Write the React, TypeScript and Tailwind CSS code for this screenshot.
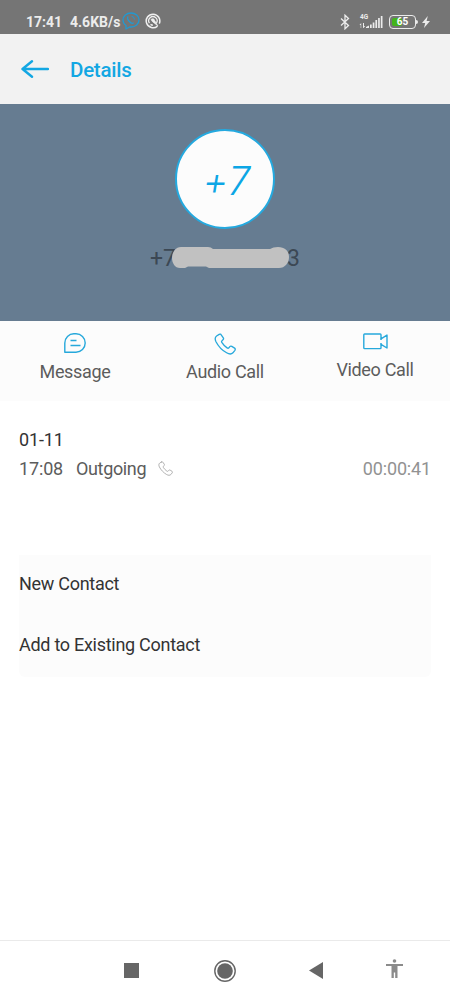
import type { ReactNode } from "react";

const menuItems = ["New Contact", "Add to Existing Contact"];

function PhoneIcon({ className }: { className: string }) {
  return (
    <svg viewBox="0 0 22 22" fill="none" stroke="currentColor" strokeWidth="1.3" strokeLinejoin="round" strokeLinecap="round" className={className}>
      <path d="M5.2 1.4 2.600 3C1 4.100.9 6.400 2 8.700 4.200 13 8.200 17.300 12.600 19.800c2.600 1.500 4.900 1.500 6.300 0l2-2.500c.6-.8.4-1.700-.3-2.200l-2.800-1.700c-.8-.5-1.500-.3-2 .3l-.9 1.100c-.5.5-1.100.6-1.800.1-2.100-1.500-4-3.400-5.300-5.500-.4-.7-.3-1.300.2-1.700l1-.9c.6-.5.7-1.200.3-1.900L7.200 1.900c-.4-.8-1.200-1-2-.5Z" />
    </svg>
  );
}

function StatusBar() {
  return (
    <div className="h-[34px] bg-[#757575] flex items-center pl-[26px] pr-[20px] pt-[9px] text-[#ececec]">
      <span className="w-[44px] text-[14px] leading-none font-bold whitespace-nowrap">17:41</span>
      <span className="w-[52px] text-[14px] leading-none font-bold whitespace-nowrap">4.6KB/s</span>
      <svg viewBox="0 0 18 18" fill="none" stroke="#2299d0" strokeWidth="1.3" strokeLinejoin="round" className="w-[18px] h-[18px] shrink-0 -mt-px">
        <path d="M4 13.500C2 12 1 10 1 8c0-4 3.500-7 8-7s8 3 8 7-3.500 7-8 7H7.500L4 17Z" />
        <path d="M6.300 4.500C5 5.300 5.400 7.200 6.900 9s3.400 2.900 4.800 1.800" />
        <path d="M9.500 4.300q2.800.3 3 3.200" strokeWidth="1" />
      </svg>
      <svg viewBox="0 0 16 16" fill="none" stroke="#f0f0f0" className="ml-[5px] -mt-px w-4 h-4 shrink-0">
        <path d="M12.500 13.100A6.800 6.800 0 1 1 14.300 10.600" strokeWidth="1.500" />
        <path d="M4.400 10.200A4.200 4.200 0 1 1 11.500 10M8 12.200a4.200 4.200 0 0 1-2.500-.8" strokeWidth="1.300" />
        <path d="M6 6.500c1-1.300 3.500-.8 3.600 1L12.800 12.800 7.500 8.700Z" fill="#f0f0f0" strokeWidth="0.700" />
      </svg>

      <div className="ml-auto flex items-center">
        <svg viewBox="0 0 10 16" fill="none" stroke="currentColor" strokeWidth="1.300" className="w-[10px] h-4">
          <path d="m1 4.500 7.500 7L5 14.800V1.200l3.500 3.300-7.500 7" />
        </svg>
        <svg viewBox="0 0 25 16" fill="currentColor" className="ml-[9px] w-[25px] h-4 overflow-visible">
          <text x="1" y="4.800" fontSize="6.500" fontWeight="700">4G</text>
          <path d="M1.700 14V11H.5l1.700-2v5ZM4 9h1v3h1.200L4.500 14H4Z" />
          <path d="M7 14v-1l3-1.500V14ZM11 10.500h1.700V14H11ZM13.700 8.500h1.700V14h-1.700ZM16.400 6h1.700v8h-1.700ZM19.100 4h1.700v10h-1.700ZM21.800 2h1.700v12h-1.700Z" />
        </svg>
        <div className="ml-[5px] w-[27px] h-[14px] border-[1.500px] border-[#ececec] rounded-[4px] p-[2px] relative">
          <div className="w-[10px] h-full bg-[#43b51b] rounded-[2px]" />
          <span className="absolute inset-0 pt-px flex items-center justify-center text-[10px] leading-none font-bold text-white">65</span>
        </div>
        <div className="w-[2px] h-1 bg-[#ececec] rounded-r-sm" />
        <svg viewBox="0 0 8 12" fill="currentColor" className="ml-1 w-2 h-3">
          <path d="M5.800 0 0 7h3.200L2 12l6-7H4.600Z" />
        </svg>
      </div>
    </div>
  );
}

function Action({ label, children }: { label: string; children: ReactNode }) {
  return (
    <button className="flex-1 flex flex-col items-center pt-3">
      {children}
      <span className="text-[18px] tracking-[-0.33px] leading-5 text-[#5c5c5c] whitespace-nowrap">{label}</span>
    </button>
  );
}

export default function App() {
  return (
    <div className="w-[450px] h-[1000px] flex flex-col bg-white overflow-hidden font-['Roboto',sans-serif]">
      <StatusBar />

      <header className="h-[70px] bg-[#f2f2f2] flex items-center pl-[21px] text-[#13a7e3]">
        <svg viewBox="0 0 28 18" fill="none" stroke="currentColor" strokeWidth="2.400" strokeLinecap="round" strokeLinejoin="round" className="w-7 h-[18px]">
          <path d="M11 1.300 1.500 9l9.500 7.700M1.500 9H27" />
        </svg>
        <h1 className="ml-[21px] mt-[2px] text-[20.500px] tracking-[-0.25px] leading-none font-medium">Details</h1>
      </header>

      <section className="h-[217px] bg-[#667c91] flex flex-col items-center pt-[25px]">
        <div className="w-[100px] h-[100px] rounded-full bg-[#fcfcfc] border-2 border-[#24a9df] flex items-center justify-center pl-[4px] pt-[2px]">
          <span className="text-[39px] leading-none italic font-light text-[#0ca6e5] tracking-[1px] font-['Inter',sans-serif]">+7</span>
        </div>
        <div className="mt-[17px] w-[150px] h-[26px] flex items-center justify-between text-[23px] text-[#3c4854] relative">
          <span>+7</span>
          <span>3</span>
          {/* redacted digits */}
          <svg viewBox="0 0 118 22" fill="#c1c1c1" className="absolute left-[22px] top-px w-[118px] h-[22px]">
            <path d="M9 0h27q3 0 5 2h57q3-2 8-2c7 0 11 4 11 10s-4 11-10 11H37l-3-1.500H16l-3 1.500H8C3 21 0 16 0 11S3 0 9 0Z" />
          </svg>
        </div>
      </section>

      <section className="h-20 bg-[#fcfcfc] flex">
        <Action label="Message">
          <svg viewBox="0 0 22 20" fill="none" stroke="#26a8db" strokeWidth="1.400" strokeLinejoin="round" className="w-[22px] h-5 mb-[9px]">
            <path d="M.8 19.200V10A9 9.200 0 0 1 10 .8h2a9.200 9.200 0 0 1 0 18.400Z" />
            <path d="M6.500 7.500h6M6.500 12.500h10" />
          </svg>
        </Action>
        <Action label="Audio Call">
          <PhoneIcon className="w-[22px] h-[22px] mb-[7px] text-[#26a8db]" />
        </Action>
        <Action label="Video Call">
          <svg viewBox="0 0 25 17" fill="none" stroke="#26a8db" strokeWidth="1.400" strokeLinejoin="round" className="w-[25px] h-[17px] mb-[10px]">
            <path d="M1.600 1h15.600q.8 0 .8.800v4l6-3.700v12.900l-6-3.700v3.500q0 .8-.8.800H1.600q-.8 0-.8-.8V1.800q0-.8.8-.8Z" />
            <path d="M18 5.500v1.500M18 10v1.500" />
          </svg>
        </Action>
      </section>

      <section className="px-[19px] pt-[29px] text-[18px] tracking-[-0.15px] leading-5">
        <h2 className="text-[#333]">01-11</h2>
        <div className="mt-[9px] flex items-center text-[#5c5c5c]">
          <span className="w-[57px]">17:08</span>
          <span className="tracking-[-0.35px]">Outgoing</span>
          <PhoneIcon className="ml-3 -mt-px w-[15px] h-[15px] text-[#a8a8a8]" />
          <span className="ml-auto text-[#929292]">00:00:41</span>
        </div>
      </section>

      <section className="mt-[76px] mx-[19px] h-[122px] bg-[#fcfcfc] text-[18px] tracking-[-0.28px] text-[#333] rounded-b-md">
        {menuItems.map((item) => (
          <button key={item} className="w-full h-[61px] pb-[4px] text-left flex items-center">
            {item}
          </button>
        ))}
      </section>

      <nav className="mt-auto h-[60px] border-t border-[#eaeaea] flex items-center text-[#666]">
        <div className="ml-[124px] w-[15px] h-[15px] bg-[#666]" />
        <svg viewBox="0 0 22 22" fill="currentColor" className="ml-[75px] w-[22px] h-[22px]">
          <circle cx="11" cy="11" r="10.200" fill="none" stroke="currentColor" strokeWidth="1.400" />
          <circle cx="11" cy="11" r="7.800" />
        </svg>
        <svg viewBox="0 0 14 17" fill="currentColor" className="ml-[73px] w-[14px] h-[17px]">
          <path d="M14 0v17L0 8.500Z" />
        </svg>
        <svg viewBox="0 0 17 19" fill="#8b8b8b" className="ml-[63px] mb-1 w-[17px] h-[19px]">
          <circle cx="8.500" cy="2" r="1.800" />
          <path d="M0 5h17v2h-5.500v12H9.200v-5.500H7.800V19H5.500V7H0Z" />
        </svg>
      </nav>
    </div>
  );
}
